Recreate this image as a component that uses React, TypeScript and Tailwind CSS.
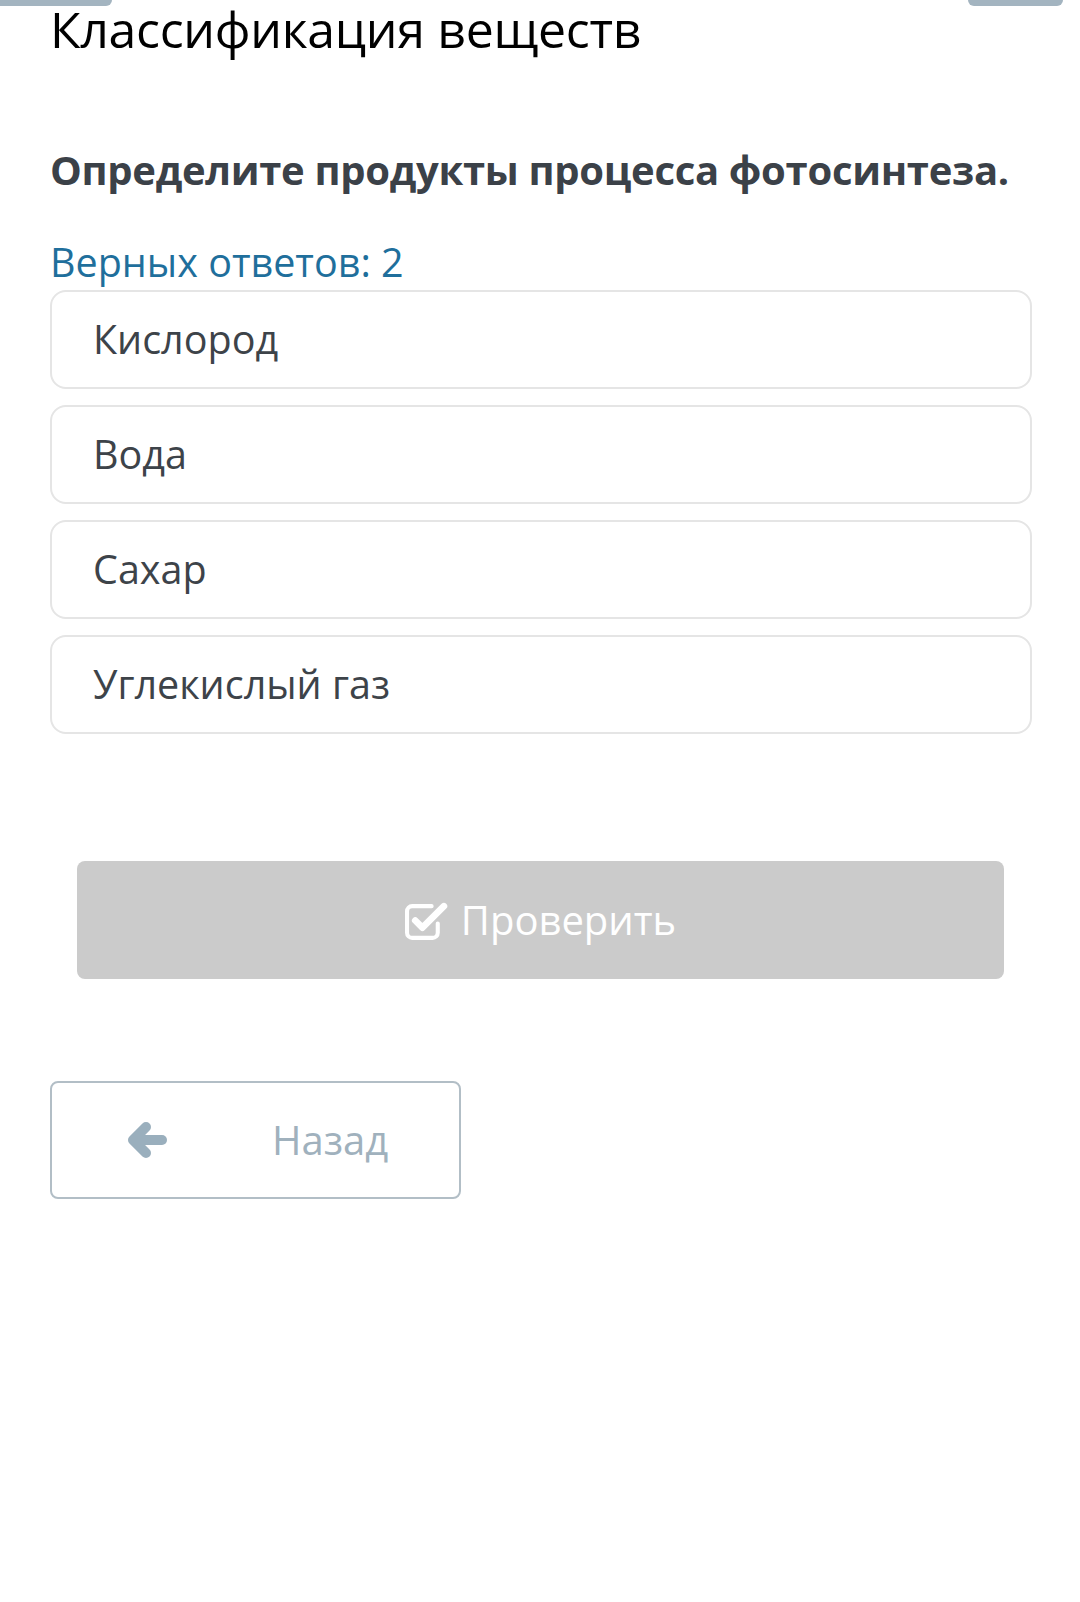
import React from "react";

const options = ["Кислород", "Вода", "Сахар", "Углекислый газ"];

function CheckSquareIcon() {
  return (
    <svg viewBox="0 0 42 38" className="w-[43px] h-[39px]" fill="none">
      <path
        d="M32 22 V31 a5 5 0 0 1 -5 5 H7 a5 5 0 0 1 -5 -5 V10 a5 5 0 0 1 5 -5 H26"
        stroke="white"
        strokeWidth="4"
        strokeLinecap="round"
        strokeLinejoin="round"
      />
      <path
        d="M10 19 L17 26 L38 5"
        stroke="white"
        strokeWidth="6.5"
        strokeLinecap="round"
        strokeLinejoin="round"
      />
    </svg>
  );
}

function ArrowLeftIcon() {
  return (
    <svg viewBox="0 0 40 38" className="w-[40px] h-[38px]" fill="none">
      <path
        d="M19 6 L6 19 L19 32"
        stroke="#9aafbd"
        strokeWidth="10"
        strokeLinecap="round"
        strokeLinejoin="round"
      />
      <path d="M8 19 H35" stroke="#9aafbd" strokeWidth="10" strokeLinecap="round" />
    </svg>
  );
}

export default function App() {
  return (
    <div
      className="min-h-[1602px] bg-white"
      style={{ fontFamily: '"Open Sans", "Noto Sans", sans-serif' }}
    >
      {/* верхние обрезанные вкладки */}
      <div className="flex justify-between h-[6px]">
        <div className="w-[112px] h-full bg-[#a3b4c0] rounded-br-[8px]" />
        <div className="w-[95px] h-full bg-[#a3b4c0] rounded-bl-[8px] rounded-br-[8px] mr-[17px]" />
      </div>

      <div className="pl-[50px] pr-[48px]">
        <h1 className="text-[50px] leading-[50px] font-normal text-black -mt-[2px] tracking-[-0.3px]">
          Классификация веществ
        </h1>

        <p className="mt-[92px] text-[40px] leading-[48px] font-bold text-[#3b4148] tracking-[-0.3px]">
          Определите продукты процесса фотосинтеза.
        </p>

        <p className="mt-[44px] text-[39.5px] leading-[48px] text-[#1f6f9c]">
          Верных ответов: 2
        </p>

        <div className="mt-[4px] flex flex-col gap-[16px]">
          {options.map((o) => (
            <div
              key={o}
              className="h-[99px] flex items-center pl-[41px] border-2 border-[#e5e5e5] rounded-[16px] text-[39.5px] text-[#3d4349]"
            >
              {o}
            </div>
          ))}
        </div>

        <div className="mt-[127px] ml-[27px] mr-[28px] h-[118px] rounded-[8px] bg-[#cbcbcb] flex items-center justify-center gap-[13px] text-white text-[40px]">
          <CheckSquareIcon />
          <span>Проверить</span>
        </div>

        <div className="mt-[102px] w-[411px] h-[118px] rounded-[8px] border-2 border-[#b2bec6] flex items-center text-[#a0b1bd]">
          <div className="ml-[75px]">
            <ArrowLeftIcon />
          </div>
          <span className="ml-[105px] text-[40px]">Назад</span>
        </div>
      </div>
    </div>
  );
}
